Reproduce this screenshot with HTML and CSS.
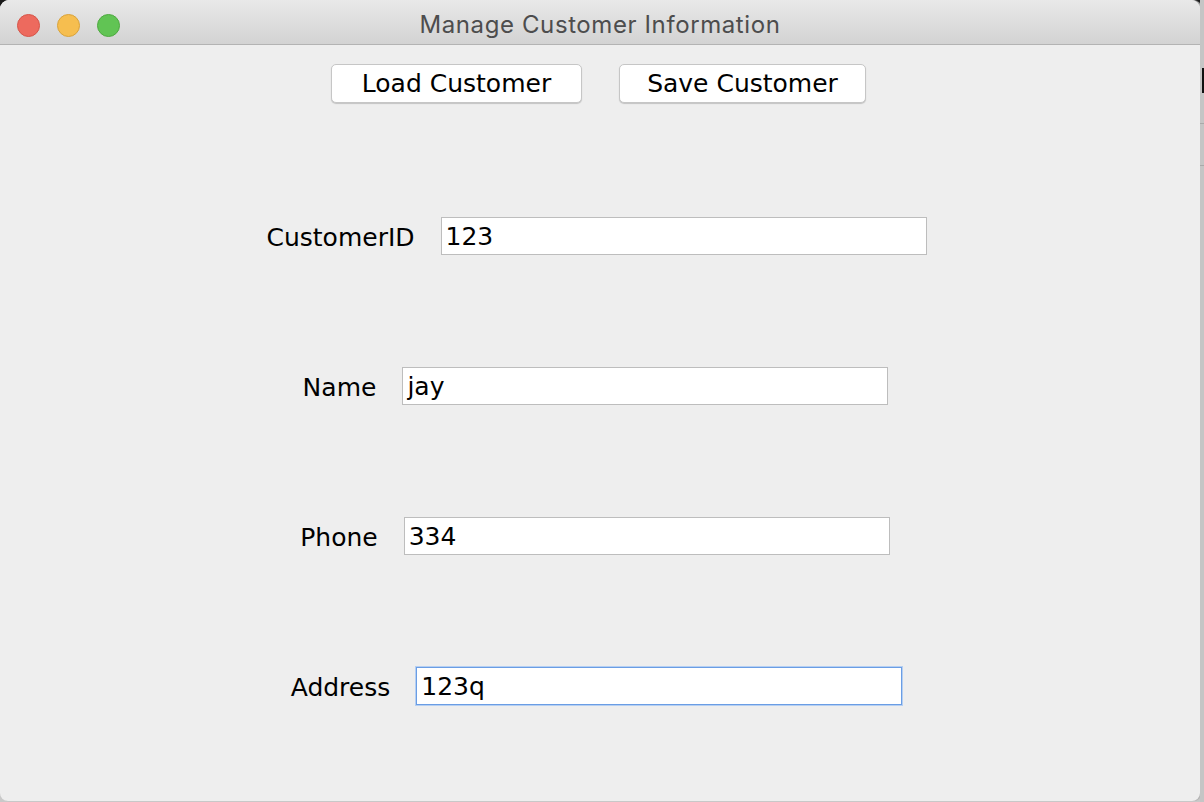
FILE: index.html
```html
<!DOCTYPE html>
<html>
<head>
<meta charset="utf-8">
<title>Manage Customer Information</title>
<link rel="stylesheet" href="styles.css">
</head>
<body>
<div class="desktop">
  <div class="window">
    <div class="titlebar">
      <div class="lights">
        <span class="light red"></span>
        <span class="light yellow"></span>
        <span class="light green"></span>
      </div>
      <div class="title">Manage Customer Information</div>
    </div>
    <div class="content">
      <div class="buttons">
        <button class="btn btn-load">Load Customer</button>
        <button class="btn btn-save">Save Customer</button>
      </div>
      <div class="form">
        <div class="row row-id">
          <label class="label">CustomerID</label>
          <div class="field">123</div>
        </div>
        <div class="row row-name">
          <label class="label">Name</label>
          <div class="field">jay</div>
        </div>
        <div class="row row-phone">
          <label class="label">Phone</label>
          <div class="field">334</div>
        </div>
        <div class="row row-address">
          <label class="label">Address</label>
          <div class="field focused">123q</div>
        </div>
      </div>
    </div>
  </div>
  <div class="edge">
    <span class="edge-bar"></span>
    <span class="edge-line edge-line1"></span>
    <span class="edge-line edge-line2"></span>
  </div>
</div>
</body>
</html>
```

FILE: styles.css
```css
html, body {
  margin: 0;
  padding: 0;
  width: 1204px;
  height: 802px;
  overflow: hidden;
}

body {
  background: linear-gradient(#1a1a1a 0, #1a1a1a 10px, #c9c9c9 10px);
}

.desktop {
  display: flex;
  width: 1204px;
  height: 802px;
}

.window {
  width: 1200px;
  height: 801px;
  background: #eeeeee;
  border-radius: 9px 9px 8px 8px;
  overflow: hidden;
  display: flex;
  flex-direction: column;
  box-shadow: 1px 0 0 #b0b0b0, 2px 0 1px #bcbcbc;
}

.titlebar {
  height: 44px;
  flex: none;
  position: relative;
  background: linear-gradient(#e9e9e9, #d3d3d3);
  border-bottom: 1px solid #b3b3b3;
  display: flex;
  align-items: center;
  justify-content: center;
  box-sizing: content-box;
}

.lights {
  position: absolute;
  left: 17px;
  top: 14px;
  display: flex;
  gap: 17px;
}

.light {
  width: 23px;
  height: 23px;
  border-radius: 50%;
  box-sizing: border-box;
}

.red { background: #ed6a5e; border: 1px solid #d65549; }
.yellow { background: #f6be4f; border: 1px solid #d9a33b; }
.green { background: #61c454; border: 1px solid #4ea940; }

.title {
  font-family: "Inter", "Noto Sans", sans-serif;
  font-size: 24px;
  color: #4d4d4d;
  letter-spacing: 0.6px;
  padding-top: 5px;
}

.content {
  flex: 1;
  display: flex;
  flex-direction: column;
  align-items: center;
  font-family: "DejaVu Sans", sans-serif;
  font-size: 25px;
  color: #000;
}

.buttons {
  display: flex;
  gap: 37px;
  margin-top: 19px;
  padding-right: 3px;
}

.btn {
  height: 39px;
  background: #ffffff;
  border: 1px solid #c6c6c6;
  border-radius: 5px;
  box-shadow: 0 1px 1px rgba(0, 0, 0, 0.18);
  font-family: "DejaVu Sans", sans-serif;
  font-size: 25px;
  color: #000;
  padding: 0;
  line-height: 36px;
}

.btn-load { width: 251px; }
.btn-save { width: 247px; }

.form {
  display: flex;
  flex-direction: column;
  gap: 112px;
  margin-top: 114px;
  width: 1200px;
}

.row {
  display: flex;
  align-items: center;
  justify-content: center;
  gap: 26px;
}

.row-id { padding-right: 7px; }
.row-name { padding-right: 9px; }
.row-phone { padding-right: 10px; }
.row-address { padding-right: 7px; }

.label {
  padding-top: 3px;
}

.field {
  width: 486px;
  height: 38px;
  box-sizing: border-box;
  background: #ffffff;
  border: 1px solid #bdbdbd;
  padding-left: 4px;
  line-height: 38px;
}

.field.focused {
  border: 1px solid #6a9de4;
  box-shadow: 0 0 0 1px #b5cff2;
}

.edge {
  width: 4px;
  position: relative;
  background: #c5c5c5;
}

.edge-bar {
  position: absolute;
  left: 2px;
  top: 68px;
  width: 2px;
  height: 25px;
  background: #111;
}

.edge-line {
  position: absolute;
  left: 0;
  width: 4px;
  height: 1px;
  background: #a9a9a9;
}

.edge-line1 { top: 123px; }
.edge-line2 { top: 165px; }
```
